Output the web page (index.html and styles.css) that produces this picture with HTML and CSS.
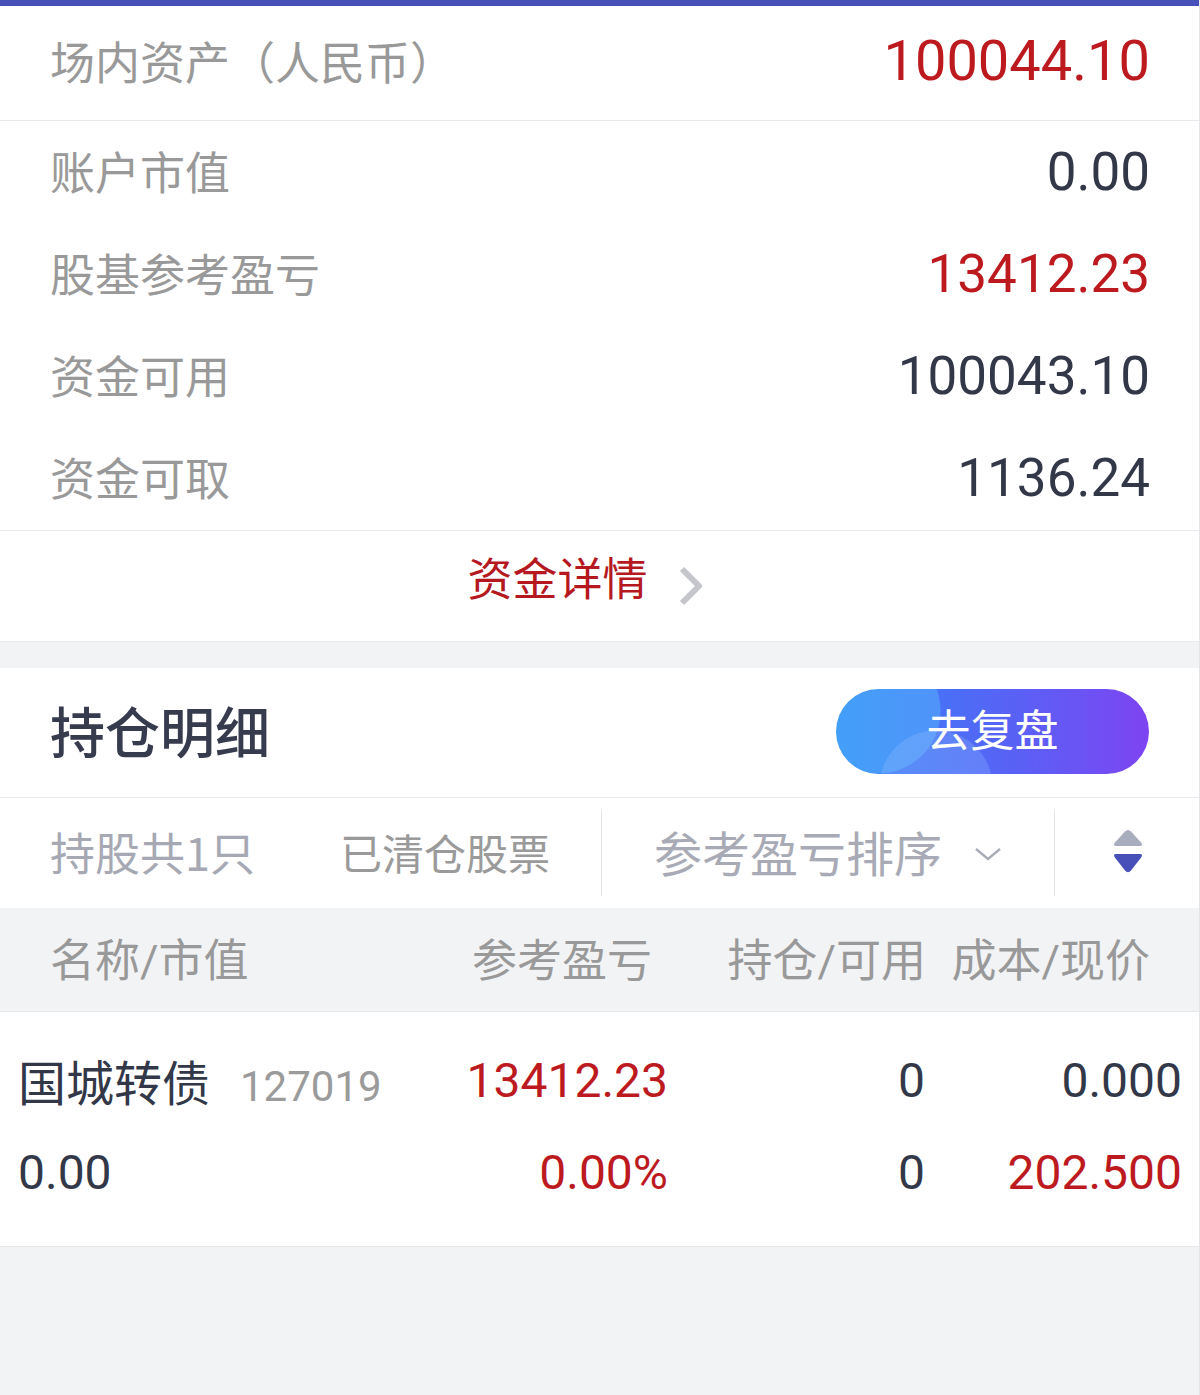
FILE: index.html
```html
<!DOCTYPE html>
<html lang="zh-CN">
<head>
<meta charset="utf-8">
<title>资产</title>
<link rel="stylesheet" href="styles.css">
</head>
<body>
<div class="page">
  <div class="topbar"></div>

  <section class="card">
    <div class="row-main">
      <span class="label">场内资产（人民币）</span>
      <span class="value big red">100044.10</span>
    </div>
    <div class="list">
      <div class="row"><span class="label">账户市值</span><span class="value">0.00</span></div>
      <div class="row"><span class="label">股基参考盈亏</span><span class="value red">13412.23</span></div>
      <div class="row"><span class="label">资金可用</span><span class="value">100043.10</span></div>
      <div class="row"><span class="label">资金可取</span><span class="value">1136.24</span></div>
    </div>
    <div class="detail-link">
      <span class="detail-text">资金详情</span>
      <svg class="detail-chevron" width="26" height="42" viewBox="0 0 26 42"><path d="M4 4 L21 21 L4 38" fill="none" stroke="#c4c6cc" stroke-width="6" stroke-linejoin="round"/></svg>
    </div>
  </section>

  <div class="gap"></div>

  <section class="holdings">
    <div class="holdings-head">
      <h2 class="title">持仓明细</h2>
      <button class="review-btn"><span>去复盘</span></button>
    </div>
    <div class="filters">
      <span class="filter f1">持股共1只</span>
      <span class="filter f2">已清仓股票</span>
      <span class="divider"></span>
      <span class="sort">
        <span>参考盈亏排序</span>
        <svg width="28" height="16" viewBox="0 0 28 16"><path d="M2 3 L14 13 L26 3" fill="none" stroke="#a8abb5" stroke-width="2.4"/></svg>
      </span>
      <span class="divider"></span>
      <span class="sort-icon">
        <svg width="32" height="48" viewBox="0 0 32 48"><path d="M16 2 Q17.5 2 19 3.6 L29.5 15 Q31 18 28 18 L4 18 Q1 18 2.5 15 L13 3.6 Q14.5 2 16 2 Z" fill="#a7adbd"/><path d="M4 26 L28 26 Q31 26 29.5 29 L19 42.4 Q16 46 13 42.4 L2.5 29 Q1 26 4 26 Z" fill="#4650b8"/></svg>
      </span>
    </div>
    <div class="thead">
      <span class="th left">名称/市值</span>
      <span class="th">参考盈亏</span>
      <span class="th">持仓/可用</span>
      <span class="th">成本/现价</span>
    </div>
    <div class="trow">
      <div class="cell left"><span class="stock">国城转债</span><span class="code">127019</span></div>
      <div class="cell red">13412.23</div>
      <div class="cell">0</div>
      <div class="cell">0.000</div>
      <div class="cell left">0.00</div>
      <div class="cell red">0.00%</div>
      <div class="cell">0</div>
      <div class="cell red">202.500</div>
    </div>
  </section>
</div>
</body>
</html>
```

FILE: styles.css
```css
* { box-sizing: border-box; margin: 0; padding: 0; }

html, body {
  background: #f2f3f5;
}

body {
  font-family: Roboto, "Noto Sans CJK SC", sans-serif;
  color: #333849;
  width: 1200px;
  min-height: 1395px;
}

.page {
  width: 1200px;
  min-height: 1395px;
  border-right: 1px solid #e4e5e8;
}

.topbar {
  height: 6px;
  background: #4650b8;
}

.card {
  background: #fff;
}

.row-main {
  height: 115px;
  padding: 0 49px 0 50px;
  display: flex;
  align-items: center;
  justify-content: space-between;
  border-bottom: 1px solid #e8e9ec;
}

.list {
  padding-top: 1px;
  border-bottom: 1px solid #e8e9ec;
}

.row {
  height: 102px;
  padding: 0 49px 0 50px;
  display: flex;
  align-items: center;
  justify-content: space-between;
}

.label {
  font-size: 45px;
  color: #999999;
  font-family: "Noto Sans CJK SC", sans-serif;
  margin-top: -5px;
}

.value {
  font-size: 53px;
  color: #333849;
  font-family: Roboto, sans-serif;
  margin-top: -2px;
}

.value.big {
  font-size: 56px;
  margin-top: -4px;
}

.red { color: #bd1a1f !important; }

.detail-link {
  height: 111px;
  display: flex;
  align-items: center;
  justify-content: center;
  gap: 30px;
  padding-right: 28px;
  border-bottom: 1px solid #e8e9ec;
}

.detail-text {
  font-size: 45px;
  color: #b5181f;
  font-family: "Noto Sans CJK SC", sans-serif;
  margin-top: -20px;
}

.detail-chevron {
  display: block;
  margin-top: 0;
}

.gap {
  height: 26px;
}

.holdings {
  background: #fff;
}

.holdings-head {
  height: 130px;
  padding: 0 50px;
  display: flex;
  align-items: center;
  justify-content: space-between;
  border-bottom: 1px solid #e8e9ec;
}

.title {
  font-size: 55px;
  font-weight: 500;
  color: #363b4e;
  font-family: "Noto Sans CJK SC", sans-serif;
  margin-top: -8px;
}

.review-btn {
  width: 313px;
  height: 85px;
  border: none;
  border-radius: 43px;
  margin-top: -3px;
  background:
    radial-gradient(circle at 100px 98px, rgba(150, 190, 255, 0.28) 0 56px, transparent 57px),
    radial-gradient(circle at 42px 22px, rgba(90, 190, 255, 0.45) 0 62px, transparent 63px),
    linear-gradient(90deg, #2f86f5 0%, #4a6ff6 35%, #5f5cf5 65%, #7e44f2 100%);
  color: #fff;
  font-family: "Noto Sans CJK SC", sans-serif;
  font-size: 44px;
  display: flex;
  align-items: center;
  justify-content: center;
}

.review-btn span {
  margin-top: -6px;
}

.filters {
  height: 110px;
  display: flex;
  align-items: center;
  padding-left: 50px;
}

.filter {
  font-family: "Noto Sans CJK SC", sans-serif;
  margin-top: -4px;
}

.f1 { width: 290px; color: #a6a9b3; font-size: 45px; }
.f2 { width: 261px; color: #9a9a9a; font-size: 42px; }

.divider {
  width: 1px;
  height: 86px;
  background: #e4e5e8;
}

.sort {
  flex: 0 0 452px;
  display: flex;
  align-items: center;
  justify-content: center;
  gap: 32px;
  font-size: 48px;
  color: #a8abb5;
  font-family: "Noto Sans CJK SC", sans-serif;
}

.sort > span { margin-top: -5px; }

.sort svg { display: block; margin-top: 2px; }

.sort-icon {
  flex: 1;
  display: flex;
  align-items: center;
  justify-content: center;
}

.sort-icon svg { display: block; margin-left: 2px; margin-top: -2px; }

.thead {
  height: 104px;
  background: #f2f3f5;
  border-bottom: 1px solid #e6e7ea;
  padding: 0 50px;
  display: grid;
  grid-template-columns: 422px 180px 274px 224px;
  align-items: center;
}

.th {
  font-size: 45px;
  color: #999999;
  text-align: right;
  white-space: nowrap;
  margin-top: -5px;
}

.th.left { text-align: left; }

.trow {
  padding: 22px 18px 28px;
  display: grid;
  grid-template-columns: 400px 250px 257px 257px;
  grid-auto-rows: 92px;
  align-items: center;
  border-bottom: 1px solid #e6e7ea;
  background: #fff;
}

.cell {
  font-size: 48px;
  color: #333849;
  text-align: right;
  white-space: nowrap;
}

.cell.left { text-align: left; }

.stock {
  font-family: "Noto Sans CJK SC", sans-serif;
  font-size: 48px;
  color: #333849;
}

.code {
  font-size: 42px;
  color: #9b9b9b;
  margin-left: 30px;
}
```
